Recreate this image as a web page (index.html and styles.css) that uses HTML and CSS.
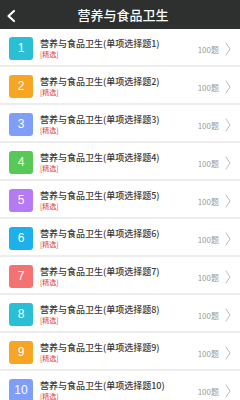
FILE: index.html
```html
<!DOCTYPE html>
<html>
<head>
  <meta charset="UTF-8">
  <title>营养与食品卫生</title>
  <link rel="stylesheet" href="styles.css">
</head>
<body>
  <div class="header">
    <svg class="back" width="10" height="14" viewBox="0 0 10 14" fill="none" stroke="#fff" stroke-width="2.2" stroke-linecap="round" stroke-linejoin="round">
      <path d="M8 2L2.5 7L8 12"></path>
    </svg>
    <h1>营养与食品卫生</h1>
  </div>
  <div class="list" id="list"></div>

  <script>
    const colors = ["#2bbfd6", "#f6a623", "#7f9ef7", "#56c957", "#b57af4", "#1cb1ea", "#f57272", "#2bbfd6", "#f6a623", "#7f9ef7"];
    const list = document.getElementById("list");

    // Build the ten rows
    colors.forEach((color, i) => {
      const n = i + 1;
      const row = document.createElement("div");
      row.className = "row";
      row.innerHTML = `
        <div class="num" style="background-color: ${color}">${n}</div>
        <div class="info">
          <div class="title">营养与食品卫生(单项选择题${n})</div>
          <div class="tag">[精选]</div>
        </div>
        <div class="count">100题</div>
        <svg class="arrow" width="6" height="14" viewBox="0 0 6 14" fill="none" stroke="#bdbdbd" stroke-width="1" stroke-linecap="round" stroke-linejoin="round">
          <path d="M1 1L5 7L1 13"></path>
        </svg>
      `;
      list.appendChild(row);
    });
  </script>
</body>
</html>
```

FILE: styles.css
```css
body {
  margin: 0;
  font-family: "Noto Sans CJK SC", "Liberation Sans", sans-serif;
  background-color: #ededed;
  overflow: hidden;
}
.header {
  height: 29px;
  background-color: #2e3030;
  display: flex;
  align-items: center;
  justify-content: center;
  position: relative;
}
.back {
  position: absolute;
  left: 6px;
  top: 9px;
}
h1 {
  margin: 0 0 0 6px;
  color: #fff;
  font-size: 13px;
  font-weight: 500;
  line-height: 29px;
}
.list {
  display: flex;
  flex-direction: column;
  gap: 2px;
}
.row {
  height: 36px;
  background-color: #fff;
  display: flex;
  align-items: center;
  padding: 0 9px 0 9px;
}
.num {
  width: 24px;
  height: 23px;
  border-radius: 3px;
  color: #fff;
  font-family: "Liberation Sans", sans-serif;
  font-size: 12px;
  display: flex;
  align-items: center;
  justify-content: center;
  margin-top: 2px;
}
.info {
  flex: 1;
  align-self: flex-start;
  margin-left: 7px;
  padding-top: 9px;
  display: flex;
  flex-direction: column;
}
.title {
  font-size: 9px;
  font-weight: 500;
  color: #3a3a3a;
  line-height: 11px;
}
.tag {
  font-size: 7px;
  color: #e53935;
  line-height: 10px;
}
.count {
  font-size: 8px;
  color: #9a9a9a;
  margin: 5px 6px 0 0;
}
.arrow {
  margin-top: 4px;
}
```
